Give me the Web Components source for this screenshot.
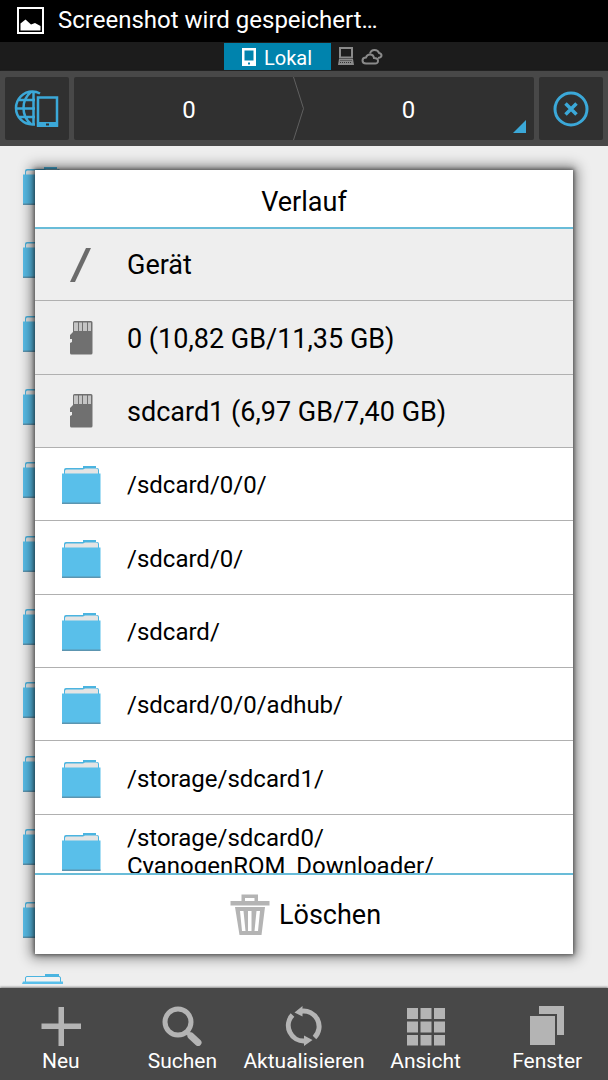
<!DOCTYPE html>
<html lang="de">
<head>
<meta charset="utf-8">
<meta name="viewport" content="width=device-width, initial-scale=1">
<title>Verlauf</title>
<style>
  html, body { margin: 0; height: 100%; }
  body { font-family: Roboto, "Noto Sans", sans-serif; background: #eee; overflow: hidden; }
</style>
</head>
<body>
<file-manager></file-manager>

<script>
const ICONS = {
  folder: `<svg viewBox="0 0 40 38" width="40" height="38"><path d="M3 8V4q0-2 2-2h17V0h13v2h1q2 0 2 2v4z" fill="#4bb4e0"/><path d="M4 5q0-1.500 1.500-1.500H22L24 2.500h11.500q1.500 0 1.500 1.500v4H4z" fill="#e4e4e4"/><path d="M1 7.500h38.500v30H1z" fill="#59bfea"/><path d="M1 36.500h38.500v1.500H1z" fill="#5c95b0"/></svg>`,
  folderOpen: `<svg viewBox="0 0 42 38" width="42" height="38"><path d="M3.500 9V4q0-1.500 1.500-1.500h32q1.500 0 1.500 1.500v5" fill="#f2f2f2" stroke="#4bb4e0"/><path d="M23 0h14v3H23z" fill="#4bb4e0"/><path d="M1 7.500h40V10H0z" fill="#59bfea"/></svg>`,
  root: `<svg viewBox="0 0 40 40" width="40" height="40"><path d="M9 37L25 3H30L14 37z" fill="#6b6b6b"/></svg>`,
  sd: `<svg viewBox="0 0 40 40" width="40" height="40"><path d="M12 3.500q0-1.500 1.500-1.500h16.500q1.500 0 1.500 1.500V34q0 1.500-1.500 1.500H10.500Q9 35.500 9 34V24l2-1v-3H9v-4l3-3z" fill="#707070"/><path d="M13 3.500h4V12h-4zm5 0h3V12h-3zm4 0h4V12h-4zm5 0h3V12h-3z" fill="#c4c4c4"/></svg>`,
  trash: `<svg viewBox="0 0 40 42" width="40" height="42"><g fill="#b4b4b4"><path d="M11.500 7V.5H28V7h11.500v4.500H.5V7zM15 4v3h9.500V4z" fill-rule="evenodd"/><path d="M5 13h30l-3.500 28h-22z"/></g><path d="M10 17h3.500l2 20h-3.500zm8 0h3.500v20H18zm8.500 0h3.500L28 37h-3.500z" fill="#fff"/></svg>`,
  plus: `<svg viewBox="0 0 40 40" width="40" height="40"><path d="M17.500 1h5.500v16.500h17V23H23v17h-5.500V23H.5v-5.500h17z" fill="#b4b4b4"/></svg>`,
  search: `<svg viewBox="0 0 40 40" width="40" height="40" fill="none" stroke="#b4b4b4"><circle cx="16" cy="16" r="13" stroke-width="5"/><path d="M25 26l2 2" stroke-width="5"/><path d="M29 30l7 6.500" stroke-width="7" stroke-linecap="round"/></svg>`,
  refresh: `<svg viewBox="0 0 40 40" width="40" height="40"><g fill="none" stroke="#b4b4b4" stroke-width="5"><path d="M8.500 9A15.500 15.500 0 0 0 21 35"/><path d="M30.500 31.500A15.500 15.500 0 0 0 17 5.200"/></g><path d="M10.500 6.500L18.500 0v10.500zM28.500 34L20 29.500V40z" fill="#b4b4b4"/></svg>`,
  grid: `<svg viewBox="0 0 40 40" width="40" height="40" fill="#b4b4b4"><path d="M1 2h11v11H1zm13.500 0h11v11h-11zM28 2h11v11H28zM1 15.500h11v11H1zm13.500 0h11v11h-11zm13.500 0h11v11H28zM1 29h11v10.500H1zm13.500 0h11v10.500h-11zM28 29h11v10.500H28z"/></svg>`,
  windows: `<svg viewBox="0 0 40 40" width="40" height="40" fill="#b4b4b4"><path d="M12 0h25v29h-7V8H12z"/><path d="M3 10h25v29H3z"/></svg>`,
  image: `<svg viewBox="0 0 28 28" width="28" height="28"><rect x="1" y="1" width="25" height="25" fill="none" stroke="#fff" stroke-width="2"/><path d="M3.500 23.500v-7l5-4 5.500 5 4-1.500 5.500 3v4.500z" fill="#fff"/></svg>`,
  phone: `<svg viewBox="0 0 14 18" width="14" height="18"><path d="M0 0h14v18H0zM2.500 2.500v10h9v-10z" fill="#fff" fill-rule="evenodd"/><rect x="6" y="14.500" width="2" height="2" fill="#0083ad"/></svg>`,
  pc: `<svg viewBox="0 0 16 19" width="16" height="19" fill="none" stroke="#8a8a8a"><rect x="2" y="1" width="12" height="9.500" stroke-width="2"/><path d="M1 12h14l1 6H0z" fill="#8a8a8a" stroke="none"/><path d="M2.500 13.500h11M2 15.500h12" stroke="#333" stroke-width="1" stroke-dasharray="1 1"/></svg>`,
  cloud: `<svg viewBox="0 0 22 18" width="22" height="18" fill="none" stroke="#8a8a8a" stroke-width="2"><path d="M5 15.500q-3.500 0-3.500-3T5 9.500q1-3 4-3 3.500 0 4 3.500 4 0 4 2.800t-3 2.700z"/><path d="M9 5.500Q10 2 13.500 2T18 5q2.500.5 2.500 2.500T17 10"/></svg>`,
  globe: `<svg viewBox="0 0 46 40" width="46" height="40" fill="none" stroke="#3ba8d8" stroke-width="2.500"><path d="M26 4.500Q22.500 2.500 18.500 2.500A16.500 16.500 0 0 0 18.500 35.500H21M19.500 3v32M17 3Q9.500 9 9.500 19t7.500 16M2 19.500h19M5 11h16M5 28h16"/><rect x="24" y="8.500" width="19" height="28" stroke-width="2.500"/><path d="M23 35.500h21" stroke-width="5"/><path d="M32 35.500h3" stroke="#303030" stroke-width="2"/></svg>`,
  close: `<svg viewBox="0 0 36 36" width="36" height="36" fill="none" stroke="#3ba8d8"><circle cx="18" cy="18" r="16" stroke-width="3"/><path d="M12.500 12.500l11 11m0-11l-11 11" stroke-width="3.500"/></svg>`,
};

function define(name, markup, setup) {
  customElements.define(name, class extends HTMLElement {
    connectedCallback() {
      if (this.shadowRoot) return;
      const root = this.attachShadow({ mode: 'open' });
      root.innerHTML = `<style>
        *{box-sizing:border-box}
        button{font:inherit;color:inherit;background:none;border:0;padding:0;margin:0;text-align:inherit}
        svg{display:block;flex:none}
        ul{list-style:none;margin:0;padding:0}
      </style>` + (typeof markup === 'function' ? markup(this) : markup);
      if (setup) setup(this, root);
    }
  });
}

define('ui-icon', el => `<style>:host{display:block;flex:none}</style>${ICONS[el.getAttribute('name')]}`);

define('status-bar', `<style>
  :host{display:flex;align-items:center;gap:13px;height:42px;padding:0 17px;background:#000;color:#fff;font-size:24px;line-height:28px;white-space:nowrap}
  span{padding-bottom:2px}
</style><ui-icon name="image"></ui-icon><span><slot></slot></span>`);

define('storage-tabs', `<style>
  :host{display:block;background:#1c1c1c}
  nav{display:flex;justify-content:center;align-items:center;height:29px;gap:7px;padding-right:2px}
  button{display:flex;align-items:center;justify-content:center;height:27px}
  .active{width:107px;background:#0083ad;color:#fff;font-size:20px;line-height:24px;gap:8px}
  .active span{padding-top:2px}
</style><nav aria-label="Speicher">
  <button class="active"><ui-icon name="phone"></ui-icon><span><slot></slot></span></button>
  <button aria-label="Netzwerk"><ui-icon name="pc"></ui-icon></button>
  <button aria-label="Cloud"><ui-icon name="cloud"></ui-icon></button>
</nav>`);

define('path-bar', `<style>
  :host{display:flex;gap:5px;padding:6px 5px;height:75px;background:#484848;box-shadow:0 1px 2px #777;color:#fff;position:relative}
  .tile{width:64px;display:flex;align-items:center;justify-content:center;background:#303030;border-radius:2px}
  nav{flex:1;display:flex;background:#303030;border-radius:2px}
  nav button{flex:1;font-size:24px;line-height:28px;text-align:center;padding-top:2px}
  .last{display:flex;align-items:center;flex:1}
  .last button{align-self:stretch}
  .sep{margin-left:-11px;align-self:stretch}
  .corner{align-self:flex-end;margin:0 8px 7px 0}
</style>
<button class="tile" aria-label="Gerät wechseln"><ui-icon name="globe"></ui-icon></button>
<nav aria-label="Pfad">
  <button>0</button>
  <svg class="sep" viewBox="0 0 11 63" width="11" height="63" fill="none" stroke="#606060"><path d="M.5 0l10 31.500L.5 63"/></svg>
  <div class="last"><button>0</button>
  <svg class="corner" viewBox="0 0 13 13" width="13" height="13"><path d="M13 0v13H0z" fill="#3ba8d8"/></svg></div>
</nav>
<button class="tile" aria-label="Schließen"><ui-icon name="close"></ui-icon></button>`);

define('folder-backdrop', `<style>
  :host{display:block;overflow:hidden;height:100%}
  ul{padding:21px 22px 0}
  li{height:73px}
  li:nth-child(3n+2){height:74px}
</style><ul aria-hidden="true">${'<li><ui-icon name="folder"></ui-icon></li>'.repeat(11)}<li><ui-icon name="folderOpen"></ui-icon></li></ul>`);

define('history-row', el => `<style>
  :host{display:block;height:73px;border-bottom:1px solid #b0b0b0;background:#fff;font-size:24px}
  :host(:nth-child(3n+2)){height:74px}
  :host([volume]){background:#eee;font-size:27px}
  button{display:flex;align-items:center;gap:26px;width:100%;height:100%;padding:2px 26px 0}
  .icon{width:40px;display:flex;justify-content:center}
  .text{line-height:28px}
</style><button><span class="icon"><ui-icon name="${el.getAttribute('icon') || 'folder'}"></ui-icon></span><span class="text"><slot></slot></span></button>`,
  el => el.setAttribute('role', 'listitem'));

define('history-dialog', `<style>
  :host{display:flex;flex-direction:column;background:#fff;color:#000;box-shadow:0 0 4px 1px rgba(0,0,0,.5),0 0 12px 4px rgba(0,0,0,.45)}
  h2{flex:none;margin:0;height:59px;padding-top:7px;border-bottom:2px solid #69bcd8;font-weight:400;font-size:27px;line-height:50px;text-align:center}
  .list{flex:1;min-height:0;overflow:hidden}
  .list slot{display:block;margin-top:-1px}
  footer{flex:none;height:81px;border-top:2px solid #69bcd8;display:flex}
  footer button{flex:1;display:flex;align-items:center;justify-content:center;gap:9px;font-size:27px;line-height:32px;padding-left:3px}
</style>
<h2>Verlauf</h2>
<div class="list" role="list"><slot></slot></div>
<footer><button><ui-icon name="trash"></ui-icon>Löschen</button></footer>`);

define('tool-button', el => `<style>
  :host{display:block;flex:1 1 0;min-width:0}
  button{display:flex;flex-direction:column;align-items:center;width:100%;gap:3px;font-size:21px;line-height:24px;white-space:nowrap}
</style><button><ui-icon name="${el.getAttribute('icon')}"></ui-icon><span><slot></slot></span></button>`);

define('tool-bar', `<style>
  :host{display:flex;height:92px;padding-top:18px;box-sizing:border-box;background:#484848;color:#fff;box-shadow:0 -1px 2px #888;position:relative}
</style><slot></slot>`);

define('file-manager', `<style>
  :host{display:flex;flex-direction:column;height:100vh}
  main{flex:1;min-height:0;position:relative;padding-bottom:4px;background:#eee}
  path-bar,history-row{box-sizing:border-box}
  history-dialog{position:absolute;inset:24px 35px 34px}
</style>
<status-bar>Screenshot wird gespeichert…</status-bar>
<storage-tabs>Lokal</storage-tabs>
<path-bar></path-bar>
<main>
  <folder-backdrop></folder-backdrop>
  <history-dialog role="dialog" aria-label="Verlauf">
    <history-row volume icon="root">Gerät</history-row>
    <history-row volume icon="sd">0 (10,82 GB/11,35 GB)</history-row>
    <history-row volume icon="sd">sdcard1 (6,97 GB/7,40 GB)</history-row>
    <history-row>/sdcard/0/0/</history-row>
    <history-row>/sdcard/0/</history-row>
    <history-row>/sdcard/</history-row>
    <history-row>/sdcard/0/0/adhub/</history-row>
    <history-row>/storage/sdcard1/</history-row>
    <history-row>/storage/sdcard0/<br>CyanogenROM_Downloader/</history-row>
  </history-dialog>
</main>
<tool-bar>
  <tool-button icon="plus">Neu</tool-button>
  <tool-button icon="search">Suchen</tool-button>
  <tool-button icon="refresh">Aktualisieren</tool-button>
  <tool-button icon="grid">Ansicht</tool-button>
  <tool-button icon="windows">Fenster</tool-button>
</tool-bar>`);
</script>
</body>
</html>
